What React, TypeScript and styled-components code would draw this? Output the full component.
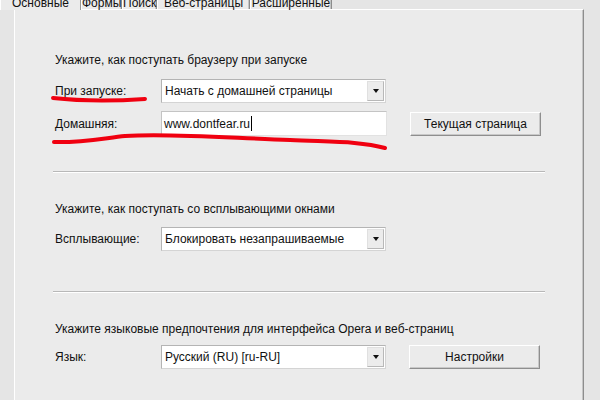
import React from 'react';
import styled, { createGlobalStyle } from 'styled-components';

const GlobalStyle = createGlobalStyle`
  html, body {
    margin: 0;
    padding: 0;
    background: #e5e5e5;
  }
  * {
    box-sizing: border-box;
  }
`;

const Screen = styled.div`
  position: relative;
  width: 600px;
  height: 400px;
  overflow: hidden;
  background: #e5e5e5;
  font-family: Tahoma, 'Liberation Sans', Arial, sans-serif;
  font-size: 12px;
  color: #111;
`;

const TabStrip = styled.div`
  display: flex;
  height: 21px;
  margin-top: -11px;
  position: relative;
  z-index: 1;
`;

const Tab = styled.div<{ active?: boolean; w: number }>`
  width: ${p => p.w}px;
  height: ${p => (p.active ? 21 : 20)}px;
  padding-top: 7px;
  line-height: 14px;
  text-align: center;
  white-space: nowrap;
  background: #ebebeb;
  border-left: 1px solid #ffffff;
  border-right: 1px solid ${p => (p.active ? '#9a9a9a' : '#8c8c8c')};
  box-shadow: ${p => (p.active ? 'none' : 'inset -1px 0 0 #c4c4c4')};
`;

const Panel = styled.div`
  margin-left: 14px;
  width: 570px;
  height: 400px;
  background: #ebebeb;
  border-top: 1px solid #ffffff;
  border-left: 1px solid #ffffff;
  border-right: 1px solid #8d8d8d;
  box-shadow: inset -1px 0 0 #c6c6c6;
  padding-left: 38px;
  margin-top: -1px;
`;

const Section = styled.div<{ top: number; bottom: number }>`
  padding-top: ${p => p.top}px;
  padding-bottom: ${p => p.bottom}px;
`;

const Heading = styled.div`
  padding-left: 2px;
  line-height: 14px;
  height: 14px;
  white-space: nowrap;
`;

const Row = styled.div<{ gap: number }>`
  display: flex;
  align-items: center;
  margin-top: ${p => p.gap}px;
  padding-left: 2px;
`;

const Label = styled.div`
  width: 106px;
  line-height: 14px;
`;

const SelectBox = styled.div`
  position: relative;
  display: flex;
  align-items: center;
  width: 225px;
  height: 24px;
  background: #ffffff;
  border: 1px solid #d4d4d4;
  border-top-color: #b4b4b4;
  border-left-color: #b4b4b4;
  padding-left: 3px;
`;

const SelectText = styled.span`
  flex: 1;
  line-height: 14px;
  white-space: nowrap;
`;

const ArrowButton = styled.div`
  width: 17px;
  height: 20px;
  margin-right: 1px;
  display: flex;
  align-items: center;
  justify-content: center;
  background: #ececec;
  border: 1px solid #e0e0e0;
  border-right-color: #b8b8b8;
  border-bottom-color: #b8b8b8;
  &::after {
    content: '';
    border-left: 3.5px solid transparent;
    border-right: 3.5px solid transparent;
    border-top: 4px solid #111;
  }
`;

const TextInput = styled.div`
  display: flex;
  align-items: center;
  width: 226px;
  height: 25px;
  background: #ffffff;
  border: 1px solid #e2e2e2;
  border-top-color: #c4c4c4;
  border-left-color: #c4c4c4;
  padding-left: 2px;
  line-height: 14px;
`;

const Caret = styled.span`
  display: inline-block;
  width: 1px;
  height: 15px;
  background: #000;
  margin-left: 1px;
`;

const Button = styled.div`
  margin-left: 23px;
  width: 131px;
  height: 24px;
  display: flex;
  align-items: center;
  justify-content: center;
  background: #ebebeb;
  border: 1px solid #ffffff;
  border-right-color: #8e8e8e;
  border-bottom-color: #8e8e8e;
  box-shadow: inset -1px -1px 0 #c8c8c8;
  line-height: 14px;
`;

const Separator = styled.div`
  width: 492px;
  height: 2px;
  border-top: 1px solid #b8b8b8;
  border-bottom: 1px solid #ffffff;
`;

const Marks = styled.svg`
  position: absolute;
  left: 0;
  top: 0;
  pointer-events: none;
`;

const tabs = [
  { title: 'Основные', w: 81, active: true },
  { title: 'Формы', w: 41 },
  { title: 'Поиск', w: 35 },
  { title: 'Веб-страницы', w: 93 },
  { title: 'Расширенные', w: 82 },
];

const Select: React.FC<{ value: string }> = ({ value }) => (
  <SelectBox>
    <SelectText>{value}</SelectText>
    <ArrowButton />
  </SelectBox>
);

const App: React.FC = () => {
  return (
    <Screen>
      <GlobalStyle />
      <TabStrip>
        <div style={{ width: 0 }} />
        {tabs.map(t => (
          <Tab key={t.title} active={t.active} w={t.w}>
            {t.title}
          </Tab>
        ))}
      </TabStrip>
      <Panel>
        <Section top={43} bottom={35}>
          <Heading>Укажите, как поступать браузеру при запуске</Heading>
          <Row gap={12}>
            <Label>При запуске:</Label>
            <Select value="Начать с домашней страницы" />
          </Row>
          <Row gap={8}>
            <Label>Домашняя:</Label>
            <TextInput>
              www.dontfear.ru
              <Caret />
            </TextInput>
            <Button>Текущая страница</Button>
          </Row>
        </Section>
        <Separator />
        <Section top={29} bottom={40}>
          <Heading>Укажите, как поступать со всплывающими окнами</Heading>
          <Row gap={11}>
            <Label>Всплывающие:</Label>
            <Select value="Блокировать незапрашиваемые" />
          </Row>
        </Section>
        <Separator />
        <Section top={29} bottom={0}>
          <Heading>Укажите языковые предпочтения для интерфейса Opera и веб-страниц</Heading>
          <Row gap={9}>
            <Label>Язык:</Label>
            <Select value="Русский (RU) [ru-RU]" />
            <Button>Настройки</Button>
          </Row>
        </Section>
      </Panel>
      <Marks width="600" height="400" viewBox="0 0 600 400">
        <path
          d="M53 98 C 80 101, 115 101, 145 99"
          stroke="#f00010"
          strokeWidth="4"
          strokeLinecap="round"
          fill="none"
        />
        <path
          d="M54 142 C 80 143, 105 138, 125 136 C 170 133, 230 138, 290 140 C 330 142, 360 141, 385 148"
          stroke="#f00010"
          strokeWidth="4"
          strokeLinecap="round"
          fill="none"
        />
      </Marks>
    </Screen>
  );
};

export default App;
